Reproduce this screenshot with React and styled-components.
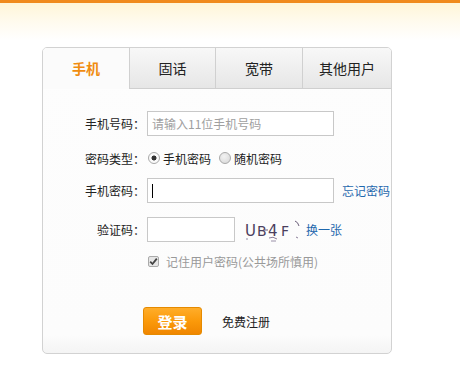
import React from "react";
import styled, { createGlobalStyle } from "styled-components";

const GlobalStyle = createGlobalStyle`
  html, body { margin: 0; padding: 0; background: #fff; }
  body { font-family: "Noto Sans CJK SC", "Liberation Sans", sans-serif; font-size: 12px; color: #333; }
  * { box-sizing: border-box; }
`;

const TopBar = styled.div`
  height: 3px;
  background: #f08a1d;
`;

const Glow = styled.div`
  height: 44px;
  background: linear-gradient(#fff5d8 0%, #fffbef 45%, #ffffff 85%);
`;

const Panel = styled.div`
  margin-left: 42px;
  width: 350px;
  height: 307px;
  border: 1px solid #d2d2d2;
  border-radius: 5px;
  overflow: hidden;
  background: linear-gradient(#fdfdfd 0%, #fcfcfc 94%, #f4f4f4 100%);
`;

const Tabs = styled.div`
  display: flex;
  height: 41px;
`;

const Tab = styled.div`
  width: ${(p) => (p.$w ? `${p.$w}px` : "auto")};
  flex: ${(p) => (p.$w ? "none" : "1")};
  display: flex;
  align-items: center;
  justify-content: center;
  font-size: 14px;
  border-left: ${(p) => (p.$first ? "none" : "1px solid #d0d0d0")};
  border-bottom: ${(p) => (p.$active ? "1px solid transparent" : "1px solid #cfcfcf")};
  background: ${(p) =>
    p.$active ? "#fbfbfb" : "linear-gradient(#f8f8f8 0%, #efefef 50%, #e6e6e6 100%)"};
  color: ${(p) => (p.$active ? "#f08c10" : "#222")};
  font-weight: ${(p) => (p.$active ? "bold" : "normal")};
`;

const Form = styled.div`
  padding-top: 22px;
`;

const Row = styled.div`
  display: flex;
  align-items: center;
  height: ${(p) => p.$h}px;
  margin-top: ${(p) => p.$mt || 0}px;
`;

const Label = styled.div`
  width: 102px;
  margin-right: 2px;
  text-align: right;
  font-size: 12px;
  color: #222;
  white-space: nowrap;
`;

const Field = styled.div`
  width: ${(p) => p.$w}px;
  height: 25px;
  border: 1px solid #c8c8c8;
  background: #fff;
  padding: 0 4px;
  display: flex;
  align-items: center;
  font-size: 12px;
  color: #a0a0a0;
`;

const Caret = styled.span`
  display: block;
  width: 1px;
  height: 14px;
  background: #000;
`;

const Radio = styled.span`
  width: 12px;
  height: 12px;
  border-radius: 50%;
  margin: 0 3px 0 1px;
  border: 1px solid #a9a9a9;
  background: ${(p) =>
    p.$on
      ? "radial-gradient(circle, #333 0 2.2px, #fafafa 2.8px)"
      : "radial-gradient(circle at 40% 35%, #f2f2f2, #d6d6d6)"};
`;

const Option = styled.span`
  font-size: 12px;
  color: #222;
  margin-right: 7px;
`;

const Link = styled.a`
  font-size: 12px;
  color: #1f68ad;
  text-decoration: none;
  margin-left: ${(p) => p.$ml || 0}px;
`;

const Captcha = styled.svg`
  margin-left: 8px;
  display: block;
`;

const Check = styled.span`
  width: 11px;
  height: 11px;
  margin-left: 1px;
  margin-right: 7px;
  border: 1px solid #aaa;
  border-radius: 2px;
  background: #e6e6e6;
  display: flex;
  align-items: center;
  justify-content: center;
`;

const Muted = styled.span`
  font-size: 12px;
  color: #999;
`;

const Actions = styled.div`
  display: flex;
  align-items: center;
  margin-top: 36px;
  padding-left: 100px;
`;

const Button = styled.button`
  width: 59px;
  height: 28px;
  border: 1px solid #e58a00;
  border-radius: 3px;
  background: linear-gradient(#ffad2a 0%, #fb9a0a 50%, #f08600 100%);
  color: #fff;
  font-family: inherit;
  font-size: 15px;
  font-weight: bold;
  padding: 0;
  cursor: pointer;
`;

const Register = styled.span`
  margin-left: 20px;
  font-size: 12px;
  color: #222;
`;

export default function App() {
  return (
    <>
      <GlobalStyle />
      <TopBar />
      <Glow />
      <Panel>
        <Tabs>
          <Tab $w={86} $first $active>手机</Tab>
          <Tab $w={86}>固话</Tab>
          <Tab $w={87}>宽带</Tab>
          <Tab>其他用户</Tab>
        </Tabs>
        <Form>
          <Row $h={25}>
            <Label>手机号码：</Label>
            <Field $w={187}>请输入11位手机号码</Field>
          </Row>
          <Row $h={20} $mt={12}>
            <Label>密码类型：</Label>
            <Radio $on />
            <Option>手机密码</Option>
            <Radio />
            <Option>随机密码</Option>
          </Row>
          <Row $h={25} $mt={10}>
            <Label>手机密码：</Label>
            <Field $w={187}><Caret /></Field>
            <Link $ml={8} href="#">忘记密码</Link>
          </Row>
          <Row $h={25} $mt={14}>
            <Label>验证码：</Label>
            <Field $w={88} />
            <Captcha width="58" height="24" viewBox="0 0 58 24">
              <g fill="#4b3f5e" fontFamily="DejaVu Sans, sans-serif" fontSize="15">
                <text x="2" y="18">U</text>
                <text x="14" y="18" fontSize="14">B</text>
                <text x="25" y="18">4</text>
                <text x="38" y="18" fontSize="14">F</text>
              </g>
              <path d="M21 12 L25 12" stroke="#6a5d78" strokeWidth="1" />
              <path d="M26 20 Q30 18 34 21" stroke="#8a7d98" strokeWidth="1" fill="none" />
              <path d="M28 23 L33 23" stroke="#9a90a8" strokeWidth="1" />
              <path d="M52 3 Q55 4 56 8" stroke="#6a5d78" strokeWidth="1" fill="none" />
              <path d="M53 19 L55 20" stroke="#8a7d98" strokeWidth="1" />
              <circle cx="4" cy="21" r="0.8" fill="#8a7d98" />
            </Captcha>
            <Link $ml={5} href="#">换一张</Link>
          </Row>
          <Row $h={20} $mt={9}>
            <Label />
            <Check>
              <svg width="9" height="9" viewBox="0 0 9 9">
                <path d="M1.2 4.6 L3.5 7 L7.8 1.6" stroke="#444" strokeWidth="1.8" fill="none" />
              </svg>
            </Check>
            <Muted>记住用户密码(公共场所慎用)</Muted>
          </Row>
          <Actions>
            <Button>登录</Button>
            <Register>免费注册</Register>
          </Actions>
        </Form>
      </Panel>
    </>
  );
}
